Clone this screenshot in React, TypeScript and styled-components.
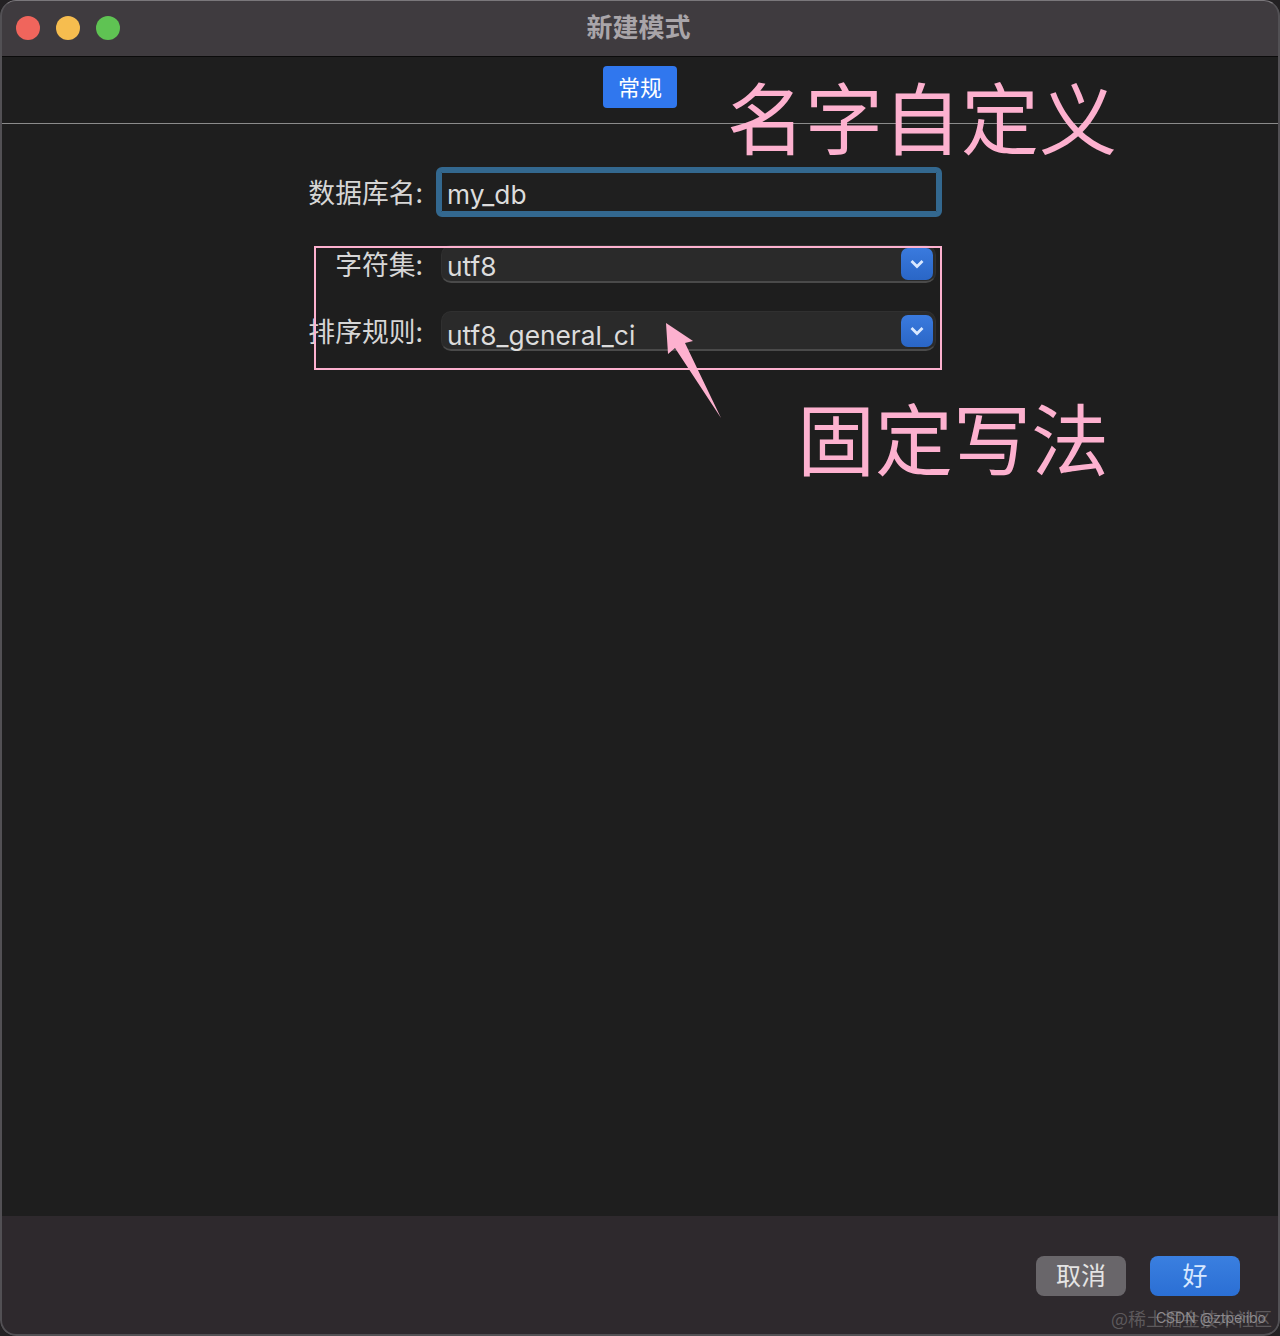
import styled, { createGlobalStyle } from 'styled-components'

const sans = `"Noto Sans CJK SC", "Liberation Sans", sans-serif`
const latin = `Inter, "Noto Sans CJK SC", sans-serif`
const pink = '#fdb1cf'

const GlobalStyle = createGlobalStyle`
  html, body {
    margin: 0;
    padding: 0;
    background: #232123;
  }
`

const Window = styled.div`
  position: relative;
  width: 1280px;
  height: 1336px;
  display: flex;
  flex-direction: column;
  overflow: hidden;
  background: #1e1e1e;
  border-radius: 16px;
  font-family: ${sans};

  &::after {
    content: '';
    position: absolute;
    inset: 0;
    border-radius: 16px;
    border: 2px solid #525054;
    border-top-color: #7a777b;
    border-top-width: 1px;
    pointer-events: none;
  }
`

const TitleBar = styled.div`
  position: relative;
  height: 57px;
  flex: none;
  box-sizing: border-box;
  display: flex;
  align-items: center;
  justify-content: center;
  background: #3f3b3f;
  border-bottom: 1px solid #0b0b0b;
`

const Lights = styled.div`
  position: absolute;
  left: 16px;
  top: 16px;
  display: flex;
  gap: 16px;
`

const Light = styled.span<{ $color: string }>`
  width: 24px;
  height: 24px;
  border-radius: 50%;
  background: ${p => p.$color};
`

const Title = styled.div`
  font-size: 26px;
  font-weight: 700;
  color: #a9a5a9;
  line-height: 1;
  margin-top: -5px;
  margin-left: -3px;
`

const Tabs = styled.div`
  height: 67px;
  flex: none;
  box-sizing: border-box;
  display: flex;
  justify-content: center;
  padding-top: 9px;
  border-bottom: 1px solid #8b8b8b;
`

const Tab = styled.div`
  width: 74px;
  height: 42px;
  border-radius: 4px;
  background: #3077ee;
  color: #fff;
  font-size: 22px;
  line-height: 40px;
  text-align: center;
`

const Content = styled.div`
  flex: 1;
  padding: 48px 0 0 300px;
  display: flex;
  flex-direction: column;
`

const Row = styled.div<{ $top?: number; $height: number }>`
  display: grid;
  grid-template-columns: 123px 495px;
  column-gap: 18px;
  align-items: center;
  height: ${p => p.$height}px;
  margin-top: ${p => p.$top ?? 0}px;
`

const Label = styled.div`
  font-size: 26.8px;
  line-height: 38px;
  color: #d6d6d6;
  text-align: right;
  white-space: nowrap;
`

const TextField = styled.div`
  height: 40px;
  width: 496px;
  box-sizing: border-box;
  padding-left: 6px;
  background: #1f1f1f;
  color: #dcdcdc;
  font-family: ${latin};
  font-size: 26.3px;
  line-height: 46px;
  border-radius: 1px;
  outline: 5px solid #33688f;
  box-shadow: inset 0 0 0 1px #33688f;
`

const Select = styled.div<{ $height: number }>`
  height: ${p => p.$height}px;
  box-sizing: border-box;
  display: flex;
  align-items: center;
  justify-content: space-between;
  padding: 0 2px 0 5px;
  border-radius: 10px;
  background: #2a2a2a;
  border: 1px solid #303030;
  border-bottom: 2px solid #4a4a4a;
  color: #dcdcdc;
  font-family: ${latin};
  font-size: 26.3px;
`

const SelectText = styled.span<{ $drop: number }>`
  padding-top: ${p => p.$drop}px;
`

const Stepper = styled.span`
  width: 32px;
  height: 32px;
  flex: none;
  border-radius: 7px;
  background: linear-gradient(#3a7ade, #2a66c6);
  display: flex;
  align-items: center;
  justify-content: center;
`

const Footer = styled.div`
  height: 120px;
  flex: none;
  box-sizing: border-box;
  background: #2e292d;
  padding: 40px 40px 0 0;
  display: flex;
  justify-content: flex-end;
  gap: 24px;
`

const Button = styled.div<{ $primary?: boolean }>`
  width: 90px;
  height: 40px;
  border-radius: 8px;
  background: ${p => (p.$primary ? 'linear-gradient(#3a7fe0, #2b6fd4)' : '#69666a')};
  color: ${p => (p.$primary ? '#d7e8ff' : '#e4e4e4')};
  font-size: 25px;
  line-height: 36px;
  text-align: center;
`

const Watermark = styled.div`
  position: absolute;
  right: 8px;
  bottom: 6px;
  font-size: 18px;
  line-height: 24px;
  color: #5d595c;
  white-space: nowrap;
`

const WatermarkTop = styled.div`
  position: absolute;
  right: 14px;
  bottom: 8px;
  font-family: ${latin};
  font-size: 14px;
  line-height: 20px;
  color: #8d8a8d;
  white-space: nowrap;
`

const Note = styled.div<{ $left: number; $top: number }>`
  position: absolute;
  left: ${p => p.$left}px;
  top: ${p => p.$top}px;
  font-size: 78px;
  line-height: 1;
  color: ${pink};
  white-space: nowrap;
`

const Frame = styled.div`
  position: absolute;
  left: 314px;
  top: 246px;
  width: 628px;
  height: 124px;
  box-sizing: border-box;
  border: 2px solid ${pink};
`

const Arrow = styled.svg`
  position: absolute;
  left: 660px;
  top: 316px;
`

const Chevron = () => (
  <svg width="16" height="16" viewBox="0 0 16 16" fill="none">
    <path d="M2.5 5 L8 10.5 L13.5 5" stroke="#d9e8ff" strokeWidth="2.8" />
  </svg>
)

export default function App() {
  return (
    <Window>
      <GlobalStyle />
      <TitleBar>
        <Lights>
          <Light $color="#f0655c" />
          <Light $color="#f6bd4f" />
          <Light $color="#5fc353" />
        </Lights>
        <Title>新建模式</Title>
      </TitleBar>
      <Tabs>
        <Tab>常规</Tab>
      </Tabs>
      <Content>
        <Row $height={40}>
          <Label>数据库名:</Label>
          <TextField>my_db</TextField>
        </Row>
        <Row $top={33} $height={38}>
          <Label>字符集:</Label>
          <Select $height={38}>
            <SelectText $drop={6}>utf8</SelectText>
            <Stepper><Chevron /></Stepper>
          </Select>
        </Row>
        <Row $top={28} $height={40}>
          <Label>排序规则:</Label>
          <Select $height={40}>
            <SelectText $drop={10}>utf8_general_ci</SelectText>
            <Stepper><Chevron /></Stepper>
          </Select>
        </Row>
      </Content>
      <Footer>
        <Button>取消</Button>
        <Button $primary>好</Button>
      </Footer>
      <Watermark>@稀土掘金技术社区</Watermark>
      <WatermarkTop>CSDN @ztpeiibo</WatermarkTop>
      <Frame />
      <Note $left={727} $top={76}>名字自定义</Note>
      <Note $left={797} $top={397}>固定写法</Note>
      <Arrow width="70" height="110" viewBox="660 316 70 110">
        <polygon points="666,323 693,341 685,343 721,418 675,348 668,354" fill={pink} />
      </Arrow>
    </Window>
  )
}
